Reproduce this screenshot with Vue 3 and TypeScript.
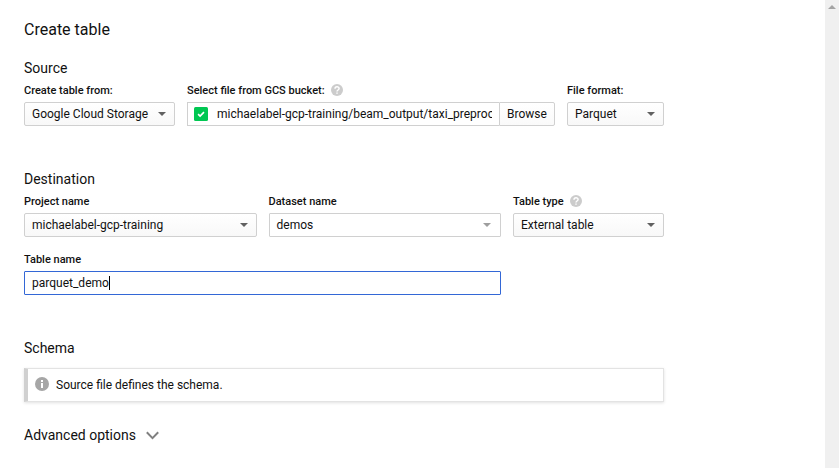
<script setup lang="ts">
import { ref } from 'vue'

const source = ref('Google Cloud Storage')
const filePath = 'michaelabel-gcp-training/beam_output/taxi_preproc'
const format = ref('Parquet')
const project = ref('michaelabel-gcp-training')
const dataset = ref('demos')
const tableType = ref('External table')
const tableName = ref('parquet_demo')
</script>

<template>
  <div class="page">
    <main class="form">
      <h1>Create table</h1>

      <section class="source">
        <h2>Source</h2>
        <div class="row">
          <div class="field narrow">
            <div class="label">Create table from:</div>
            <div class="control select"><span>{{ source }}</span><i class="arrow"></i></div>
          </div>
          <div class="field grow">
            <div class="label">
              Select file from GCS bucket:
              <svg class="help" viewBox="0 0 12 12"><circle cx="6" cy="6" r="6" fill="#ccc" /><path d="M4 4.7C4 2.2 8.1 2.2 8.1 4.6 8.1 6 6 6 6 7.5M6 8.5v1.3" fill="none" stroke="#fff" stroke-width="1.45" /></svg>
            </div>
            <div class="picker">
              <div class="control file">
                <svg class="check" viewBox="0 0 14 14"><rect width="14" height="14" rx="1.5" fill="#00c752" /><path d="M4.1 7.1l2 2 3.9-4" fill="none" stroke="#fff" stroke-width="1.6" /></svg>
                <span class="path">{{ filePath }}</span>
              </div>
              <div class="control browse">Browse</div>
            </div>
          </div>
          <div class="field format">
            <div class="label">File format:</div>
            <div class="control select"><span>{{ format }}</span><i class="arrow"></i></div>
          </div>
        </div>
      </section>

      <section class="destination">
        <h2>Destination</h2>
        <div class="row">
          <div class="field project">
            <div class="label">Project name</div>
            <div class="control select"><span>{{ project }}</span><i class="arrow"></i></div>
          </div>
          <div class="field grow">
            <div class="label">Dataset name</div>
            <div class="control select plain"><span>{{ dataset }}</span><i class="arrow"></i></div>
          </div>
          <div class="field narrow">
            <div class="label">
              Table type
              <svg class="help" viewBox="0 0 12 12"><circle cx="6" cy="6" r="6" fill="#ccc" /><path d="M4 4.7C4 2.2 8.1 2.2 8.1 4.6 8.1 6 6 6 6 7.5M6 8.5v1.3" fill="none" stroke="#fff" stroke-width="1.45" /></svg>
            </div>
            <div class="control select"><span>{{ tableType }}</span><i class="arrow"></i></div>
          </div>
        </div>
        <div class="field table-name">
          <div class="label">Table name</div>
          <div class="control focused"><span>{{ tableName }}</span><i class="caret"></i></div>
        </div>
      </section>

      <section class="schema">
        <h2>Schema</h2>
        <div class="notice">
          <svg class="info" viewBox="0 0 14 14"><circle cx="7" cy="7" r="7" fill="#a6a6a6" /><path d="M6 3h2v2H6zM6 6h2v5H6z" fill="#fff" /></svg>
          <span>Source file defines the schema.</span>
        </div>
      </section>

      <div class="advanced">
        <h2>Advanced options</h2>
        <svg class="chevron" viewBox="0 0 13 9"><path d="M.8 1.2l5.7 5.9 5.7-5.9" fill="none" stroke="#808080" stroke-width="2" /></svg>
      </div>
    </main>
    <aside class="scrollbar"><i class="up"></i></aside>
  </div>
</template>

<style>
body {
  margin: 0;
  overflow: hidden;
  background: #fff;
}
</style>

<style scoped>
.page {
  display: flex;
  justify-content: space-between;
  height: 468px;
  font: 12px/16px Roboto, sans-serif;
  color: #111;
}
.form {
  width: 640px;
  padding: 20px 0 0 24px;
}
h1, h2 {
  margin: 0;
  font-weight: 400;
  line-height: 20px;
}
h1 { font-size: 16px; }
h2 { font-size: 14px; }
.source { margin-top: 18px; }
.destination { margin-top: 43px; }
.schema { margin-top: 43px; }
.row {
  display: flex;
  gap: 12px;
  margin-top: 4px;
}
.field { min-width: 0; }
.narrow { width: 151px; }
.format { width: 97px; }
.project { width: 232.5px; }
.grow { flex: 1; }
.table-name {
  width: 477px;
  margin-top: 14px;
}
.label {
  display: flex;
  align-items: center;
  gap: 6px;
  box-sizing: border-box;
  height: 16px;
  margin-bottom: 4px;
  padding-top: 2px;
  font-size: 11px;
  font-weight: 500;
  white-space: nowrap;
}
.help {
  width: 12px;
  height: 12px;
  margin-bottom: 2px;
}
.control {
  display: flex;
  align-items: center;
  box-sizing: border-box;
  height: 24px;
  padding: 0 7px;
  border: 1px solid #d0d0d0;
  border-radius: 2px;
  background: #fff;
  white-space: nowrap;
}
.select {
  justify-content: space-between;
  padding-right: 8px;
  background: linear-gradient(#fff, #f8f8f8);
}
.select.plain {
  padding-right: 9px;
  border-radius: 1px;
  background: #fff;
}
.arrow {
  border: 4px solid transparent;
  border-top-color: #616161;
  border-bottom: 0;
}
.plain .arrow { border-top-color: #9e9e9e; }
.picker { display: flex; }
.file {
  flex: 1;
  min-width: 0;
  padding: 0 7px 0 6px;
  border-right: 0;
  border-radius: 0;
}
.check {
  flex: none;
  width: 14px;
  height: 14px;
  margin: 0 9px 1px 0;
}
.path { overflow: hidden; }
.browse {
  width: 56px;
  border-radius: 0 2px 2px 0;
  background: linear-gradient(#fff, #fafafa);
}
.focused {
  border-color: #3367d6;
  border-radius: 1px;
}
.caret {
  width: 1px;
  height: 14px;
  background: #000;
}
.notice {
  display: flex;
  align-items: center;
  gap: 7px;
  box-sizing: border-box;
  height: 34px;
  margin-top: 10px;
  padding-left: 7px;
  border: 1px solid #e3e3e3;
  border-left: 4px solid #d0d0d0;
  box-shadow: 0 1px 3px rgba(0, 0, 0, .12);
}
.info {
  width: 14px;
  height: 14px;
  margin-bottom: 2px;
}
.advanced {
  display: flex;
  align-items: center;
  gap: 10px;
  margin-top: 23px;
}
.chevron {
  width: 13px;
  height: 9px;
}
.scrollbar {
  display: flex;
  justify-content: center;
  width: 14px;
  background: #f0f0f0;
}
.up {
  align-self: flex-start;
  margin-top: 5px;
  border: 4px solid transparent;
  border-top: 0;
  border-bottom-color: #a3a3a3;
}
</style>
